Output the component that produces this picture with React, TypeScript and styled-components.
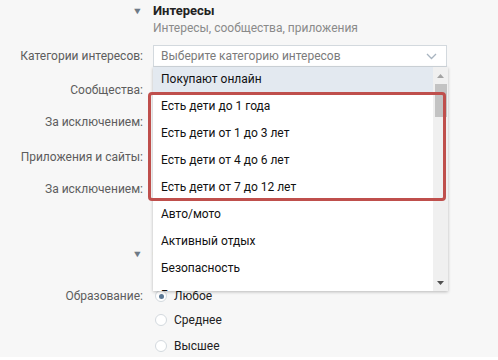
import React from "react";
import styled, { createGlobalStyle } from "styled-components";

const GlobalStyle = createGlobalStyle`
    html, body {
        margin: 0;
        padding: 0;
        background: #ffffff;
    }
    body {
        font-family: Roboto, "Open Sans", sans-serif;
        font-size: 12px;
        color: #000;
    }
`;

const Page = styled.div`
    width: 498px;
    height: 357px;
    overflow: hidden;
    background: #f7f7f7;
    padding-top: 2px;
    box-sizing: border-box;
`;

const Section = styled.div`
    display: grid;
    grid-template-columns: 143px 294px;
    column-gap: 10px;
    align-items: center;
`;

const Toggle = styled.div<{ $gap?: number }>`
    justify-self: end;
    font-size: 9px;
    color: #6e7a86;
    transform: scaleX(1.2);
    padding-right: 1px;
    margin-top: ${(p) => p.$gap ?? 0}px;
`;

const Title = styled.div<{ $gap?: number }>`
    font-weight: 700;
    font-size: 13px;
    color: #222;
    line-height: 18px;
    margin-top: ${(p) => p.$gap ?? 0}px;
`;

const Subtitle = styled.div`
    grid-column: 2;
    color: #8a8a8a;
    line-height: 16px;
    margin-bottom: 9px;
`;

const Label = styled.div<{ $gap?: number }>`
    justify-self: end;
    color: #5d5d5d;
    line-height: 22px;
    margin-top: ${(p) => p.$gap ?? 0}px;
    white-space: nowrap;
`;

const Field = styled.div<{ $gap?: number }>`
    height: 22px;
    margin-top: ${(p) => p.$gap ?? 0}px;
`;

const SelectWrap = styled.div`
    position: relative;
    height: 22px;
`;

const SelectBox = styled.div`
    box-sizing: border-box;
    height: 22px;
    border: 1px solid #d3d9de;
    background: #fff;
    display: flex;
    align-items: center;
    justify-content: space-between;
    padding: 0 9px 0 7px;
    color: #7b7b7b;
`;

const Dropdown = styled.div`
    position: absolute;
    top: 22px;
    left: 0;
    width: 295px;
    height: 224px;
    background: #fff;
    box-shadow: 0 1px 3px rgba(0, 0, 0, 0.25);
    display: flex;
    z-index: 2;
`;

const List = styled.div`
    flex: 1;
    overflow: hidden;
`;

const Item = styled.div<{ $active?: boolean }>`
    height: 27px;
    line-height: 25px;
    padding-left: 8px;
    color: #111;
    background: ${(p) => (p.$active ? "#e3e9f0" : "#fff")};
    white-space: nowrap;
`;

const Scrollbar = styled.div`
    width: 15px;
    background: #f0f0f0;
    display: flex;
    flex-direction: column;
    align-items: center;
`;

const Arrow = styled.div`
    height: 17px;
    display: flex;
    align-items: center;
    justify-content: center;
`;

const Thumb = styled.div`
    width: 12px;
    height: 33px;
    background: #c3c3c3;
`;

const Track = styled.div`
    flex: 1;
`;

const Highlight = styled.div`
    position: absolute;
    top: 47px;
    left: -5px;
    width: 298px;
    height: 109px;
    box-sizing: border-box;
    border: 3px solid #bf4f4c;
    border-radius: 4px;
    z-index: 3;
`;

const Radios = styled.div`
    grid-column: 2;
    display: flex;
    flex-direction: column;
`;

const RadioRow = styled.div<{ $h?: number }>`
    display: flex;
    align-items: center;
    height: ${(p) => p.$h ?? 26}px;
    gap: 7px;
    color: #222;
    padding-left: 2px;
`;

const Circle = styled.span<{ $checked?: boolean }>`
    box-sizing: border-box;
    width: 12px;
    height: 12px;
    border-radius: 50%;
    border: 1px solid #d3d9de;
    background: #fff;
    display: flex;
    align-items: center;
    justify-content: center;

    &::after {
        content: "";
        width: 5px;
        height: 5px;
        border-radius: 50%;
        background: ${(p) => (p.$checked ? "#5b7895" : "transparent")};
    }
`;

const Chevron = () => (
    <svg width="11" height="7" viewBox="0 0 11 7">
        <path d="M1 1l4.5 4.5L10 1" fill="none" stroke="#a8b4c0" strokeWidth="1.3" />
    </svg>
);

const Tri: React.FC<{ up?: boolean }> = ({ up }) => (
    <svg width="7" height="4" viewBox="0 0 7 4">
        <path d={up ? "M0 4h7L3.5 0z" : "M0 0h7L3.5 4z"} fill={up ? "#a3a3a3" : "#505050"} />
    </svg>
);

const items = [
    "Покупают онлайн",
    "Есть дети до 1 года",
    "Есть дети от 1 до 3 лет",
    "Есть дети от 4 до 6 лет",
    "Есть дети от 7 до 12 лет",
    "Авто/мото",
    "Активный отдых",
    "Безопасность",
    "Бизнес",
];

export default function App() {
    return (
        <>
            <GlobalStyle />
            <Page>
                <Section>
                    <Toggle>▼</Toggle>
                    <Title>Интересы</Title>
                    <Subtitle>Интересы, сообщества, приложения</Subtitle>

                    <Label>Категории интересов:</Label>
                    <SelectWrap>
                        <SelectBox>
                            <span>Выберите категорию интересов</span>
                            <Chevron />
                        </SelectBox>
                        <Dropdown>
                            <List>
                                {items.map((item, i) => (
                                    <Item key={item} $active={i === 0}>
                                        {item}
                                    </Item>
                                ))}
                            </List>
                            <Scrollbar>
                                <Arrow>
                                    <Tri up />
                                </Arrow>
                                <Thumb />
                                <Track />
                                <Arrow>
                                    <Tri />
                                </Arrow>
                            </Scrollbar>
                        </Dropdown>
                        <Highlight />
                    </SelectWrap>

                    <Label $gap={12}>Сообщества:</Label>
                    <Field $gap={12} />
                    <Label $gap={10}>За исключением:</Label>
                    <Field $gap={10} />
                    <Label $gap={13}>Приложения и сайты:</Label>
                    <Field $gap={13} />
                    <Label $gap={10}>За исключением:</Label>
                    <Field $gap={10} />

                    <Toggle $gap={45}>▼</Toggle>
                    <Title $gap={45}>Общее</Title>

                    <Label $gap={22}>Образование:</Label>
                    <Field $gap={22}>
                        <RadioRow $h={22}>
                            <Circle $checked />
                            Любое
                        </RadioRow>
                    </Field>
                    <Radios>
                        <RadioRow>
                            <Circle />
                            Среднее
                        </RadioRow>
                        <RadioRow>
                            <Circle />
                            Высшее
                        </RadioRow>
                    </Radios>
                </Section>
            </Page>
        </>
    );
}
